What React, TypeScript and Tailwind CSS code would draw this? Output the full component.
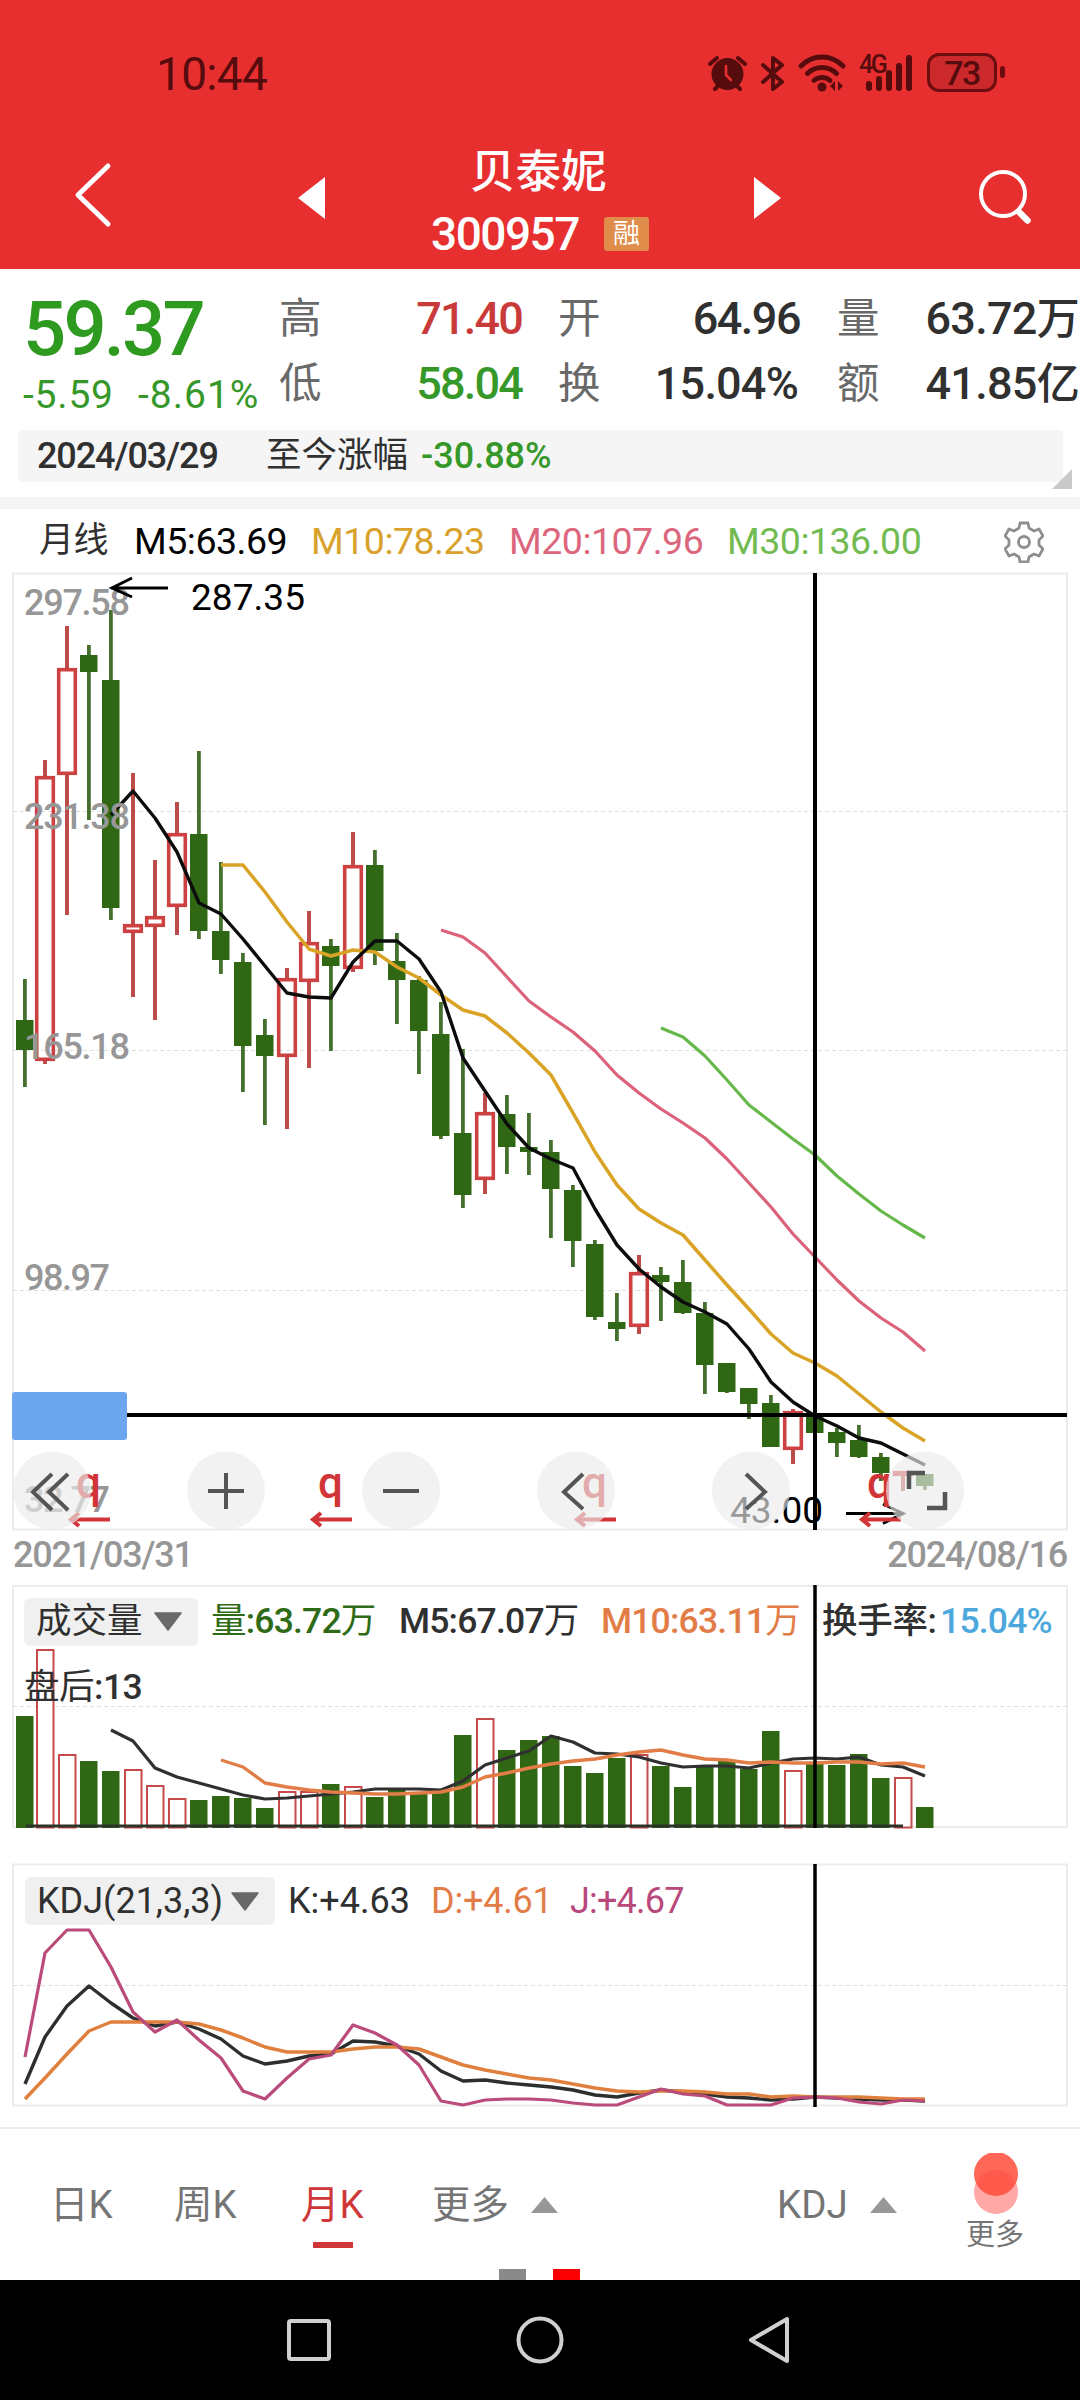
import type { ReactNode } from "react";

type Candle = [dir: "r" | "g", high: number, top: number, bottom: number, low: number];

// one candle per month, y values on the chart's own scale
const candles: Candle[] = [
  ["g", 979, 1020, 1050, 1087],
  ["r", 760, 776, 1061, 1064],
  ["r", 626, 668, 775, 915],
  ["g", 645, 655, 672, 820],
  ["g", 610, 680, 908, 920],
  ["r", 773, 924, 933, 997],
  ["r", 860, 916, 927, 1020],
  ["r", 802, 833, 907, 935],
  ["g", 751, 834, 931, 939],
  ["g", 862, 931, 960, 974],
  ["g", 953, 962, 1046, 1092],
  ["g", 1019, 1035, 1056, 1125],
  ["r", 968, 978, 1057, 1129],
  ["r", 911, 942, 982, 1068],
  ["g", 939, 946, 966, 1051],
  ["r", 832, 865, 969, 972],
  ["g", 850, 865, 951, 965],
  ["g", 933, 961, 980, 1024],
  ["g", 976, 980, 1031, 1074],
  ["g", 1002, 1034, 1136, 1139],
  ["g", 1049, 1133, 1195, 1208],
  ["r", 1093, 1112, 1180, 1194],
  ["g", 1095, 1114, 1147, 1174],
  ["g", 1113, 1147, 1152, 1175],
  ["g", 1140, 1152, 1189, 1238],
  ["g", 1185, 1190, 1241, 1267],
  ["g", 1240, 1244, 1317, 1320],
  ["g", 1293, 1322, 1329, 1341],
  ["r", 1255, 1272, 1327, 1334],
  ["g", 1267, 1275, 1282, 1321],
  ["g", 1260, 1282, 1313, 1314],
  ["g", 1302, 1313, 1365, 1394],
  ["g", 1363, 1363, 1392, 1393],
  ["g", 1388, 1388, 1404, 1419],
  ["g", 1395, 1403, 1447, 1447],
  ["r", 1409, 1411, 1450, 1464],
  ["g", 1390, 1415, 1433, 1438],
  ["g", 1428, 1432, 1443, 1457],
  ["g", 1425, 1440, 1457, 1458],
  ["g", 1453, 1457, 1473, 1481],
  ["r", 1471, 1471, 1476, 1491],
  ["g", 1474, 1474, 1486, 1490],
];

const ma5 = [815, 791, 818, 852, 903, 914, 939, 966, 993, 997, 998, 962, 941, 941, 959, 992, 1058, 1091, 1124, 1148, 1159, 1168, 1209, 1245, 1269, 1287, 1302, 1312, 1324, 1349, 1382, 1402, 1416, 1426, 1438, 1443, 1454, 1465];
const ma10 = [865, 865, 892, 922, 949, 956, 950, 952, 967, 978, 995, 1010, 1016, 1033, 1053, 1075, 1113, 1152, 1185, 1209, 1223, 1235, 1260, 1285, 1309, 1334, 1353, 1363, 1376, 1394, 1412, 1428, 1441];
const ma20 = [930, 937, 953, 977, 1001, 1017, 1032, 1051, 1075, 1093, 1109, 1123, 1138, 1159, 1183, 1207, 1234, 1257, 1280, 1301, 1318, 1332, 1351];
const ma30 = [1028, 1037, 1056, 1080, 1105, 1122, 1139, 1155, 1176, 1194, 1211, 1225, 1238];

const volTops = [1716, 1649, 1754, 1761, 1771, 1769, 1785, 1798, 1800, 1796, 1798, 1808, 1791, 1791, 1784, 1786, 1797, 1790, 1792, 1791, 1735, 1718, 1750, 1740, 1736, 1766, 1773, 1758, 1754, 1766, 1787, 1767, 1761, 1769, 1731, 1770, 1764, 1765, 1754, 1778, 1777, 1807];
const vol5 = [1730, 1741, 1768, 1777, 1783, 1789, 1795, 1799, 1798, 1796, 1794, 1792, 1789, 1789, 1789, 1790, 1781, 1765, 1758, 1751, 1736, 1742, 1753, 1754, 1757, 1763, 1767, 1766, 1766, 1768, 1763, 1759, 1758, 1759, 1757, 1765, 1767, 1776];
const vol10 = [1760, 1767, 1783, 1787, 1790, 1792, 1793, 1794, 1794, 1793, 1792, 1787, 1777, 1773, 1768, 1764, 1761, 1759, 1755, 1752, 1750, 1755, 1759, 1760, 1763, 1762, 1763, 1763, 1762, 1762, 1764, 1763, 1767];

const kLine = [2084, 2037, 2006, 1986, 2003, 2018, 2026, 2022, 2029, 2039, 2056, 2064, 2061, 2056, 2054, 2041, 2042, 2046, 2054, 2071, 2081, 2080, 2083, 2085, 2087, 2090, 2095, 2097, 2093, 2090, 2092, 2094, 2097, 2098, 2100, 2099, 2097, 2098, 2099, 2100, 2100, 2101];
const dLine = [2099, 2078, 2054, 2031, 2022, 2022, 2022, 2022, 2024, 2030, 2038, 2047, 2052, 2052, 2052, 2049, 2047, 2047, 2049, 2057, 2065, 2070, 2074, 2078, 2080, 2084, 2088, 2091, 2092, 2091, 2091, 2092, 2094, 2094, 2097, 2096, 2097, 2097, 2097, 2098, 2099, 2099];
const jLine = [2057, 1953, 1930, 1930, 1967, 2012, 2032, 2020, 2040, 2058, 2091, 2099, 2078, 2059, 2055, 2025, 2033, 2045, 2065, 2101, 2105, 2100, 2099, 2099, 2100, 2103, 2105, 2105, 2097, 2089, 2094, 2096, 2105, 2105, 2105, 2098, 2097, 2098, 2102, 2104, 2100, 2101];

const xAt = (i: number) => (i === 0 ? 25 : 23 + 22 * i);

// series are right-aligned: the last value always sits on the last candle
const toPoints = (ys: number[]) =>
  ys.map((y, i) => `${xAt(candles.length - ys.length + i)},${y}`).join(" ");

const GREEN = "#2f6715";
const RED = "#cd4142";

function Line({ ys, color, width = 3.2 }: { ys: number[]; color: string; width?: number }) {
  return <polyline points={toPoints(ys)} fill="none" stroke={color} strokeWidth={width} strokeLinejoin="round" />;
}

function Frame({ y, height, grid }: { y: number; height: number; grid: number[] }) {
  return (
    <>
      <rect x="13" y={y} width="1054" height={height} fill="none" stroke="#ececec" strokeWidth="2" />
      {grid.map((g) => (
        <line key={g} x1="13" x2="1067" y1={g} y2={g} stroke="#dedede" strokeWidth="1.2" strokeDasharray="4 3" />
      ))}
    </>
  );
}

function StatusBar() {
  return (
    <div className="flex h-[110px] items-start pl-[156px] pt-[46px] text-[#560b0d]">
      <div className="w-[552px] pt-[1px] text-[46px] leading-[54px] tracking-[-0.7px]">10:44</div>
      <svg className="mt-[9px]" width="39" height="37" viewBox="0 0 39 37" fill="none" stroke="currentColor" strokeWidth="4" strokeLinecap="round">
        <circle cx="19.5" cy="19" r="16" fill="currentColor" stroke="none" />
        <path d="M2 9 9 3M37 9l-7-6M7 34l3-3M32 34l-3-3" />
        <path d="M18 11v9l5 5" stroke="#e72f2f" strokeWidth="2.6" />
      </svg>
      <svg className="ml-[14px] mt-[9px]" width="24" height="37" viewBox="0 0 24 37" fill="none" stroke="currentColor" strokeWidth="4" strokeLinejoin="round" strokeLinecap="round">
        <path d="M2 10 21 27 12 34V3l9 7L2 27" />
      </svg>
      <svg className="ml-[13px] mt-[8px]" width="49" height="38" viewBox="0 0 49 38" fill="none" stroke="currentColor" strokeWidth="4.8" strokeLinecap="round">
        <path d="M3 12c12-12 30-12 42 0M9.500 19.500c8-8 21-8 29 0M16 26.500c4.500-4 12-4 16 0" />
        <circle cx="24" cy="33" r="4.500" fill="currentColor" stroke="none" />
        <path d="M37 27v10l-5-5zM40 37V27l5 5z" fill="currentColor" stroke="none" />
      </svg>
      <div className="relative ml-[12px] mt-[8px] h-[38px] w-[54px]">
        <span className="absolute left-0 top-[-1px] text-[25px] font-medium leading-[24px] tracking-[-2.5px]">4G</span>
        <svg width="54" height="38" viewBox="0 0 54 38" stroke="currentColor" strokeWidth="6" strokeLinecap="round">
          <path d="M10 30v4M20 25v9M30 19v15M40 12v22M50 4v30" />
        </svg>
      </div>
      <div className="ml-[14px] mt-[7px] flex h-[39px] w-[70px] items-center justify-center rounded-[12px] border-[3px] border-[#6e0d10] bg-[#cb292c] text-[34px] font-medium leading-none tracking-[-1.500px]">
        73
      </div>
      <div className="ml-[3px] mt-[20px] h-[12px] w-[5px] rounded-full bg-[#6e0d10]" />
    </div>
  );
}

function TitleBar() {
  return (
    <div className="flex h-[159px] items-start text-white">
      <svg className="ml-[72px] mt-[52px]" width="42" height="66" viewBox="0 0 42 66" fill="none" stroke="currentColor" strokeWidth="5" strokeLinecap="round" strokeLinejoin="round">
        <path d="M36 4 6 33l30 29" />
      </svg>
      <svg className="ml-[184px] mt-[67px]" width="27" height="42" viewBox="0 0 27 42">
        <path d="M27 0v42L0 21z" fill="currentColor" />
      </svg>
      <div className="ml-[105px] flex w-[221px] flex-col">
        <div className="mt-[30px] pl-[40px] text-[45.500px] font-medium leading-[66px]">贝泰妮</div>
        <div className="mt-[-1px] flex h-[58px] items-center">
          <span className="w-[174px] pl-[1px] text-[46px] font-medium tracking-[-1.500px]">300957</span>
          <span className="flex h-[34px] w-[45px] items-center justify-center rounded-[3px] bg-[#e08c4b] text-[27px] leading-none">融</span>
        </div>
      </div>
      <svg className="ml-[103px] mt-[67px]" width="27" height="42" viewBox="0 0 27 42">
        <path d="M0 0v42l27-21z" fill="currentColor" />
      </svg>
      <svg className="ml-[195px] mt-[58px]" width="60" height="60" viewBox="0 0 60 60" fill="none" stroke="currentColor" strokeLinecap="round">
        <circle cx="27" cy="26" r="22" strokeWidth="4" />
        <path d="m43 44 8.500 8.500" strokeWidth="6.500" />
      </svg>
    </div>
  );
}

function Stat({ label, value, className }: { label: string; value: ReactNode; className: string }) {
  return (
    <div className="flex h-[65px] items-center justify-between text-[45px]">
      <span className="text-[42.500px] text-[#696969]">{label}</span>
      <span className={className}>{value}</span>
    </div>
  );
}

function Quote() {
  return (
    <div className="relative h-[228px] bg-white">
      <div className="flex h-[161px] pt-[17px]">
        <div className="w-[279px] shrink-0 pl-[23px] text-[#37982a]">
          <div className="mt-[1px] text-[76px] font-medium leading-[84px] tracking-[-2.800px] text-[#2f9a20]">59.37</div>
          <div className="flex pt-[1px] text-[39px] leading-[46px]">
            <span className="w-[115px] tracking-[0.800px]">-5.59</span>
            <span className="tracking-[1px]">-8.61%</span>
          </div>
        </div>
        <div className="w-[279px] shrink-0 pr-[36px]">
          <Stat label="高" value="71.40" className="font-medium tracking-[-1.800px] text-[#c93b3a]" />
          <Stat label="低" value="58.04" className="font-medium tracking-[-1.800px] text-[#37982a]" />
        </div>
        <div className="w-[279px] shrink-0 pr-[37px]">
          <Stat label="开" value="64.96" className="font-medium tracking-[-1.500px] text-[#303030]" />
          <Stat label="换" value="15.04%" className="mr-[2px] font-medium tracking-[-0.800px] text-[#303030]" />
        </div>
        <div className="w-[242px] shrink-0 whitespace-nowrap">
          <Stat label="量" value={<>63.72<span className="text-[43px]">万</span></>} className="font-medium tracking-[-0.700px] text-[#303030]" />
          <Stat label="额" value={<>41.85<span className="text-[43px]">亿</span></>} className="font-medium tracking-[-0.700px] text-[#303030]" />
        </div>
      </div>
      <div className="ml-[18px] flex h-[52px] w-[1045px] items-center rounded-[4px] bg-[#f5f5f5] pl-[19px] text-[36px] text-[#303030]">
        <span className="w-[229px] font-medium tracking-[-1.100px]">2024/03/29</span>
        <span className="w-[155px] text-[35.500px]">至今涨幅</span>
        <span className="font-medium text-[#37982a]">-30.88%</span>
      </div>
      <svg className="absolute bottom-[8px] right-[8px]" width="20" height="20" viewBox="0 0 20 20">
        <path d="M20 0v20H0z" fill="#c9c9c9" />
      </svg>
    </div>
  );
}

function MaLegend() {
  return (
    <div className="flex h-[63px] items-center pl-[39px] pt-[2px] text-[37.500px] tracking-[-0.500px]">
      <span className="w-[95px] text-[35px] text-[#303030]">月线</span>
      <span className="w-[177px] text-black">M5:63.69</span>
      <span className="w-[198px] text-[#d8a22c]">M10:78.23</span>
      <span className="w-[218px] text-[#dc667c]">M20:107.96</span>
      <span className="w-[277px] text-[#72bb52]">M30:136.00</span>
      <svg width="40" height="42" viewBox="0 0 40 42" fill="none" stroke="#8e8e8e" strokeWidth="2.800" strokeLinejoin="round">
        <path d="M16 2h8l1 5 5 3 5-2 4 7-4 4v5l4 4-4 7-5-2-5 3-1 5h-8l-1-5-5-3-5 2-4-7 4-4v-5l-4-4 4-7 5 2 5-3z" />
        <circle cx="20" cy="21" r="5.500" />
      </svg>
    </div>
  );
}

function CandleChart() {
  return (
    <svg className="block" width="1080" height="960" viewBox="0 572 1080 960">
      <Frame y={573.5} height={956} grid={[811.5, 1050.5, 1290.5]} />
      {candles.map(([dir, high, top, bottom, low], i) => {
        const x = xAt(i);
        return dir === "g" ? (
          <g key={i} fill={GREEN}>
            <rect x={x - 2} y={high} width="3.800" height={low - high} fill="#46702f" />
            <rect x={x - 9} y={top} width="17.500" height={bottom - top} />
          </g>
        ) : (
          <g key={i} fill="#bb4c4a">
            <rect x={x - 2} y={high} width="4" height={top - high} />
            <rect x={x - 2} y={bottom} width="4" height={low - bottom} />
            <rect x={x - 8.3} y={top + 1.7} width="16.600" height={Math.max(bottom - top - 3.4, 1)} fill="none" stroke={RED} strokeWidth="3.600" />
          </g>
        );
      })}
      <Line ys={ma30} color="#66b84a" />
      <Line ys={ma20} color="#dc617a" />
      <Line ys={ma10} color="#d9a326" width={3.5} />
      <Line ys={ma5} color="#0c0c0c" width={3.4} />

      <g fontSize="36" fontWeight="500" fill="#979797">
        <text x="24" y="615" textLength="106">297.58</text>
        <text x="24" y="829" textLength="106">231.38</text>
        <text x="24" y="1059" textLength="106">165.18</text>
        <text x="24" y="1290" textLength="86">98.97</text>
        <text x="24" y="1512" textLength="86">32.77</text>
      </g>
      <g fontSize="37" fill="#000">
        <text x="191" y="610" textLength="114">287.35</text>
        <text x="730" y="1523" textLength="93">43.00</text>
      </g>
      <g fill="none" stroke="#000" strokeWidth="3">
        <path d="M168 588H111M132 578l-20 10 20 9" />
        <path d="M846 1513.500h57M883 1504l20 9.500-20 10" />
      </g>
      {[69, 311, 575, 860].map((x) => (
        <g key={x} fill="#d23537">
          <text x={x + 7} y="1498" fontSize="44" fontWeight="500">q</text>
          <path d={`M${x + 41} 1519.500H${x + 2}M${x + 10} 1513l-8 6.500 8 6.500`} fill="none" stroke="#d23537" strokeWidth="4" />
        </g>
      ))}

      <path d="M815 573v957M127 1415h940" stroke="#000" strokeWidth="4" />
      <rect x="12" y="1392" width="115" height="48" rx="3" fill="#6ba6ef" />

      <g fill="#ebebeb" fillOpacity="0.65">
        {[52, 226, 401, 576, 751, 925].map((x) => (
          <circle key={x} cx={x} cy="1490.500" r="39" />
        ))}
      </g>
      <g fill="none" stroke="#555" strokeWidth="4">
        <path d="M52 1474l-19 18 19 18M68 1474l-19 18 19 18" />
        <path d="M208 1491h36M226 1473v36M383 1491h36" />
        <path d="M583 1474l-19 18 19 17M746 1474l19 18-19 17" />
        <path d="M909 1489v-16h16M927 1508h18v-16" strokeWidth="4.500" />
      </g>
    </svg>
  );
}

function Picker({ label, className }: { label: string; className: string }) {
  return (
    <span className={`flex h-[48px] items-center justify-between rounded-[6px] bg-[#f0f0f0] pl-[12px] pr-[16px] ${className}`}>
      {label}
      <svg width="28" height="19" viewBox="0 0 28 19">
        <path d="M1 1h26L14 18z" fill="#686868" stroke="#686868" strokeWidth="1.500" strokeLinejoin="round" />
      </svg>
    </span>
  );
}

function VolumeChart() {
  return (
    <div className="relative h-[244px]">
      <svg className="block" width="1080" height="244" viewBox="0 1585 1080 244">
        <Frame y={1586} height={241} grid={[1706.5]} />
        {volTops.map((top, i) =>
          candles[i][0] === "g" ? (
            <rect key={i} x={xAt(i) - 9} y={top} width="17.500" height={1828 - top} fill={GREEN} />
          ) : (
            <rect key={i} x={xAt(i) - 8} y={top + 1} width="16.500" height={1826.5 - top} fill="#fff" stroke="#c54a4c" strokeWidth="2" />
          ),
        )}
        <path d="M26 1826h877" stroke="#2c3327" strokeWidth="3" />
        <Line ys={vol5} color="#303030" />
        <Line ys={vol10} color="#e27d48" width={3.4} />
        <path d="M815 1585v243" stroke="#000" strokeWidth="3.500" />
      </svg>
      <div className="absolute left-[24px] top-[10px] flex items-center text-[35.500px] font-medium tracking-[-0.800px] text-[#303030]">
        <Picker label="成交量" className="w-[174px] font-normal tracking-normal" />
        <span className="ml-[13px] w-[188px] text-[#2f6b17]">
          <span className="font-normal">量</span>:63.72<span className="font-normal">万</span>
        </span>
        <span className="w-[202px]">
          M5:67.07<span className="font-normal">万</span>
        </span>
        <span className="w-[221px] text-[#e27d48]">
          M10:63.11<span className="font-normal">万</span>
        </span>
        <span className="w-[118px] tracking-[-0.300px]">换手率:</span>
        <span className="text-[#4ca8dc]">15.04%</span>
      </div>
      <div className="absolute left-[24px] top-[76px] text-[35.500px] leading-[52px] tracking-[-0.500px] text-[#303030]">
        盘后<span className="font-medium">:13</span>
      </div>
    </div>
  );
}

function KdjChart() {
  return (
    <div className="relative mt-[34px] h-[244px]">
      <svg className="block" width="1080" height="244" viewBox="0 1863 1080 244">
        <Frame y={1864.5} height={241} grid={[1985.5]} />
        <Line ys={kLine} color="#2d2f2f" width={3.4} />
        <Line ys={dLine} color="#e0803f" width={3.5} />
        <Line ys={jLine} color="#ba4b7a" />
        <path d="M815 1864v243" stroke="#000" strokeWidth="3.500" />
      </svg>
      <div className="absolute left-[25px] top-[11px] flex items-center text-[36px] text-[#303030]">
        <Picker label="KDJ(21,3,3)" className="w-[250px]" />
        <span className="ml-[13px] w-[143px]">K:+4.63</span>
        <span className="w-[139px] tracking-[-0.200px] text-[#e27d48]">D:+4.61</span>
        <span className="tracking-[-0.800px] text-[#b9487c]">J:+4.67</span>
      </div>
    </div>
  );
}

function Up({ className }: { className: string }) {
  return (
    <svg className={className} width="27" height="16" viewBox="0 0 27 16">
      <path d="M13.500 0 27 16H0z" fill="#979797" />
    </svg>
  );
}

function Tabs() {
  return (
    <div className="mt-[20px] flex h-[153px] flex-col border-t-2 border-[#ececec]">
      <div className="flex h-[140px] pl-[50px] text-[38.500px] leading-[56px] text-[#757575]">
        <div className="mt-[48px] w-[124px]">日K</div>
        <div className="mt-[48px] w-[127px]">周K</div>
        <div className="mt-[48px] w-[131px] text-[#cf3638]">
          月K
          <div className="ml-[12px] mt-[9px] h-[6px] w-[40px] bg-[#cf3638]" />
        </div>
        <div className="mt-[48px] flex h-[56px] w-[345px] items-center">
          更多
          <Up className="ml-[22px]" />
        </div>
        <div className="mt-[48px] flex h-[56px] w-[188px] items-center">
          KDJ
          <Up className="ml-[22px]" />
        </div>
        <div className="mt-[24px] w-[62px]">
          <svg className="ml-[9px] block" width="44" height="62" viewBox="0 0 44 62">
            <circle cx="22" cy="39" r="22" fill="#ffa8a5" />
            <circle cx="22" cy="21" r="22" fill="#ff6858" />
            <path d="M3 29c5-16 33-16 38 0-5 18-33 18-38 0z" fill="#ff5a4c" />
          </svg>
          <div className="pl-[1px] pt-[1px] text-[29px] leading-[38px]">更多</div>
        </div>
      </div>
      <div className="flex h-[11px] gap-[27px] pl-[499px]">
        <div className="w-[27px] bg-[#8a8a8a]" />
        <div className="w-[27px] bg-[#fb0000]" />
      </div>
    </div>
  );
}

function NavBar() {
  return (
    <div className="flex h-[120px] items-center bg-black text-[#d0d0d0]">
      <svg className="ml-[286px]" width="46" height="50" viewBox="0 0 46 50" fill="none" stroke="currentColor" strokeWidth="4">
        <rect x="3" y="6" width="40" height="38" rx="2" />
      </svg>
      <svg className="ml-[183px]" width="50" height="50" viewBox="0 0 50 50" fill="none" stroke="currentColor" strokeWidth="4">
        <circle cx="25" cy="25" r="21.500" />
      </svg>
      <svg className="ml-[181px]" width="46" height="50" viewBox="0 0 46 50" fill="none" stroke="currentColor" strokeWidth="4" strokeLinejoin="round">
        <path d="M41 4v42L5 25z" />
      </svg>
    </div>
  );
}

export default function App() {
  return (
    <div className="h-[2400px] w-[1080px] overflow-hidden bg-white font-['Roboto','Noto_Sans_CJK_SC',sans-serif]">
      <header className="h-[269px] bg-[#e72f2f]">
        <StatusBar />
        <TitleBar />
      </header>
      <Quote />
      <div className="h-[12px] bg-[#f5f5f5]" />
      <MaLegend />
      <CandleChart />
      <div className="flex h-[53px] items-center justify-between pb-[7px] pl-[13px] pr-[13px] text-[36px] font-medium tracking-[-1.200px] text-[#979797]">
        <span>2021/03/31</span>
        <span>2024/08/16</span>
      </div>
      <VolumeChart />
      <KdjChart />
      <Tabs />
      <NavBar />
    </div>
  );
}
